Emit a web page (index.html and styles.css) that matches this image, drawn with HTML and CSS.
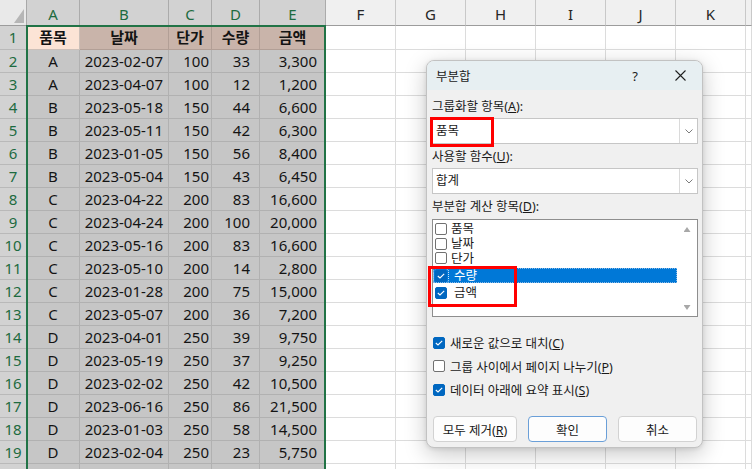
FILE: index.html
```html
<!DOCTYPE html>
<html lang="ko">
<head>
<meta charset="utf-8">
<title>부분합</title>
<link rel="stylesheet" href="styles.css">
</head>
<body>
<div class="sheet">
  <div class="row hdr">
    <div class="corner"><span class="tri"></span></div>
    <div class="ch sel">A</div><div class="ch sel">B</div><div class="ch sel">C</div><div class="ch sel">D</div><div class="ch sel">E</div>
    <div class="ch">F</div><div class="ch">G</div><div class="ch">H</div><div class="ch">I</div><div class="ch">J</div><div class="ch">K</div><div class="ch"></div>
  </div>
  <div class="row r1">
    <div class="rh">1</div>
    <div class="act b ctr">품목</div><div class="pch b ctr">날짜</div><div class="pch b ctr">단가</div><div class="pch b ctr">수량</div><div class="pch b ctr">금액</div>
    <div></div><div></div><div></div><div></div><div></div><div></div><div></div>
  </div>
  <div class="row"><div class="rh">2</div><div class="g ctr">A</div><div class="g rt pb">2023-02-07</div><div class="g rt pc">100</div><div class="g rt pd">33</div><div class="g rt pe">3,300</div><div></div><div></div><div></div><div></div><div></div><div></div><div></div></div>
  <div class="row"><div class="rh">3</div><div class="g ctr">A</div><div class="g rt pb">2023-04-07</div><div class="g rt pc">100</div><div class="g rt pd">12</div><div class="g rt pe">1,200</div><div></div><div></div><div></div><div></div><div></div><div></div><div></div></div>
  <div class="row"><div class="rh">4</div><div class="g ctr">B</div><div class="g rt pb">2023-05-18</div><div class="g rt pc">150</div><div class="g rt pd">44</div><div class="g rt pe">6,600</div><div></div><div></div><div></div><div></div><div></div><div></div><div></div></div>
  <div class="row"><div class="rh">5</div><div class="g ctr">B</div><div class="g rt pb">2023-05-11</div><div class="g rt pc">150</div><div class="g rt pd">42</div><div class="g rt pe">6,300</div><div></div><div></div><div></div><div></div><div></div><div></div><div></div></div>
  <div class="row"><div class="rh">6</div><div class="g ctr">B</div><div class="g rt pb">2023-01-05</div><div class="g rt pc">150</div><div class="g rt pd">56</div><div class="g rt pe">8,400</div><div></div><div></div><div></div><div></div><div></div><div></div><div></div></div>
  <div class="row"><div class="rh">7</div><div class="g ctr">B</div><div class="g rt pb">2023-05-04</div><div class="g rt pc">150</div><div class="g rt pd">43</div><div class="g rt pe">6,450</div><div></div><div></div><div></div><div></div><div></div><div></div><div></div></div>
  <div class="row"><div class="rh">8</div><div class="g ctr">C</div><div class="g rt pb">2023-04-22</div><div class="g rt pc">200</div><div class="g rt pd">83</div><div class="g rt pe">16,600</div><div></div><div></div><div></div><div></div><div></div><div></div><div></div></div>
  <div class="row"><div class="rh">9</div><div class="g ctr">C</div><div class="g rt pb">2023-04-24</div><div class="g rt pc">200</div><div class="g rt pd">100</div><div class="g rt pe">20,000</div><div></div><div></div><div></div><div></div><div></div><div></div><div></div></div>
  <div class="row"><div class="rh">10</div><div class="g ctr">C</div><div class="g rt pb">2023-05-16</div><div class="g rt pc">200</div><div class="g rt pd">83</div><div class="g rt pe">16,600</div><div></div><div></div><div></div><div></div><div></div><div></div><div></div></div>
  <div class="row"><div class="rh">11</div><div class="g ctr">C</div><div class="g rt pb">2023-05-10</div><div class="g rt pc">200</div><div class="g rt pd">14</div><div class="g rt pe">2,800</div><div></div><div></div><div></div><div></div><div></div><div></div><div></div></div>
  <div class="row"><div class="rh">12</div><div class="g ctr">C</div><div class="g rt pb">2023-01-28</div><div class="g rt pc">200</div><div class="g rt pd">75</div><div class="g rt pe">15,000</div><div></div><div></div><div></div><div></div><div></div><div></div><div></div></div>
  <div class="row"><div class="rh">13</div><div class="g ctr">C</div><div class="g rt pb">2023-05-07</div><div class="g rt pc">200</div><div class="g rt pd">36</div><div class="g rt pe">7,200</div><div></div><div></div><div></div><div></div><div></div><div></div><div></div></div>
  <div class="row"><div class="rh">14</div><div class="g ctr">D</div><div class="g rt pb">2023-04-01</div><div class="g rt pc">250</div><div class="g rt pd">39</div><div class="g rt pe">9,750</div><div></div><div></div><div></div><div></div><div></div><div></div><div></div></div>
  <div class="row"><div class="rh">15</div><div class="g ctr">D</div><div class="g rt pb">2023-05-19</div><div class="g rt pc">250</div><div class="g rt pd">37</div><div class="g rt pe">9,250</div><div></div><div></div><div></div><div></div><div></div><div></div><div></div></div>
  <div class="row"><div class="rh">16</div><div class="g ctr">D</div><div class="g rt pb">2023-02-02</div><div class="g rt pc">250</div><div class="g rt pd">42</div><div class="g rt pe">10,500</div><div></div><div></div><div></div><div></div><div></div><div></div><div></div></div>
  <div class="row"><div class="rh">17</div><div class="g ctr">D</div><div class="g rt pb">2023-06-16</div><div class="g rt pc">250</div><div class="g rt pd">86</div><div class="g rt pe">21,500</div><div></div><div></div><div></div><div></div><div></div><div></div><div></div></div>
  <div class="row"><div class="rh">18</div><div class="g ctr">D</div><div class="g rt pb">2023-01-03</div><div class="g rt pc">250</div><div class="g rt pd">58</div><div class="g rt pe">14,500</div><div></div><div></div><div></div><div></div><div></div><div></div><div></div></div>
  <div class="row"><div class="rh">19</div><div class="g ctr">D</div><div class="g rt pb">2023-02-04</div><div class="g rt pc">250</div><div class="g rt pd">23</div><div class="g rt pe">5,750</div><div></div><div></div><div></div><div></div><div></div><div></div><div></div></div>
  <div class="row"><div class="rh"></div><div class="g"></div><div class="g"></div><div class="g"></div><div class="g"></div><div class="g"></div><div></div><div></div><div></div><div></div><div></div><div></div><div></div></div>
</div>
<div class="selbox"></div>

<div class="dialog">
  <div class="titlebar">
    <span class="title">부분합</span>
    <span class="help">?</span>
    <span class="close"><svg width="11" height="11" viewBox="0 0 11 11"><path d="M0.5 0.5 L10.5 10.5 M10.5 0.5 L0.5 10.5" stroke="#1f1f1f" stroke-width="1.1" fill="none"/></svg></span>
  </div>
  <div class="dbody">
    <div class="lbl">그룹화할 항목(<u>A</u>):</div>
    <div class="combo"><span class="val">품목</span><span class="drop"><svg width="8" height="5" viewBox="0 0 8 5"><path d="M0.5 0.5 L4 4 L7.5 0.5" stroke="#7c7c7c" fill="none"/></svg></span></div>
    <div class="lbl mt">사용할 함수(<u>U</u>):</div>
    <div class="combo"><span class="val">합계</span><span class="drop"><svg width="8" height="5" viewBox="0 0 8 5"><path d="M0.5 0.5 L4 4 L7.5 0.5" stroke="#7c7c7c" fill="none"/></svg></span></div>
    <div class="lbl mt">부분합 계산 항목(<u>D</u>):</div>
    <div class="list">
      <div class="items">
        <div class="item"><span class="cb"></span><span>품목</span></div>
        <div class="item"><span class="cb"></span><span>날짜</span></div>
        <div class="item cut"><span class="cb"></span><span>단가</span></div>
        <div class="item hi chk"><span class="cb on focus"><svg width="8" height="6" viewBox="0 0 8 6"><path d="M0.8 3 L3 5 L7.2 0.8" stroke="#fff" stroke-width="1.1" fill="none"/></svg></span><span>수량</span></div>
        <div class="item last chk"><span class="cb on"><svg width="8" height="6" viewBox="0 0 8 6"><path d="M0.8 3 L3 5 L7.2 0.8" stroke="#fff" stroke-width="1.1" fill="none"/></svg></span><span>금액</span></div>
      </div>
      <div class="scroll"><span class="arr up"></span><span class="arr down"></span></div>
    </div>
    <div class="opts">
      <div class="opt"><span class="cb on"><svg width="8" height="6" viewBox="0 0 8 6"><path d="M0.8 3 L3 5 L7.2 0.8" stroke="#fff" stroke-width="1.1" fill="none"/></svg></span><span>새로운 값으로 대치(<u>C</u>)</span></div>
      <div class="opt"><span class="cb"></span><span>그룹 사이에서 페이지 나누기(<u>P</u>)</span></div>
      <div class="opt"><span class="cb on"><svg width="8" height="6" viewBox="0 0 8 6"><path d="M0.8 3 L3 5 L7.2 0.8" stroke="#fff" stroke-width="1.1" fill="none"/></svg></span><span>데이터 아래에 요약 표시(<u>S</u>)</span></div>
    </div>
    <div class="btns">
      <button class="btn w84">모두 제거(<u>R</u>)</button>
      <button class="btn w79 def">확인</button>
      <button class="btn w79">취소</button>
    </div>
  </div>
  <div class="mark m1"></div>
  <div class="mark m2"></div>
</div>
</body>
</html>
```

FILE: styles.css
```css
* { box-sizing: border-box; margin: 0; padding: 0; }
html, body { width: 752px; height: 469px; overflow: hidden; }
body {
  position: relative;
  background: #ffffff;
  font-family: "Noto Sans", "Noto Sans CJK KR", sans-serif;
  color: #141414;
}

/* ---------- sheet ---------- */
.sheet { display: flex; flex-direction: column; font-size: 15px; }
.row {
  display: grid;
  grid-template-columns: 27px 53px 89px 43px 48px 66px 70px 70px 70px 70px 70px 70px 6px;
  height: 23px;
  flex: none;
}
.row.hdr { height: 26px; }
.row.r1 { height: 24px; }
.row > div {
  border-right: 1px solid #dcdcdc;
  border-bottom: 1px solid #dcdcdc;
  display: flex;
  align-items: center;
  white-space: nowrap;
  overflow: hidden;
  line-height: 1;
}
.row > .corner {
  background: #e9e9e9;
  justify-content: flex-end;
  align-items: flex-end;
  padding: 0 2px 2px 0;
  border-right-color: #a8a8a8;
  border-bottom-color: #9c9c9c;
}
.tri {
  width: 10px;
  height: 14px;
  background: #b6b6b6;
  clip-path: polygon(100% 0, 100% 100%, 0 100%);
}
.row > .ch {
  justify-content: center;
  padding-top: 3px;
  background: #f0f0f0;
  border-right-color: #c8c8c8;
  border-bottom-color: #9c9c9c;
  color: #262626;
}
.row > .ch.sel {
  background: #d2d2d2;
  color: #1d6b40;
  border-right-color: #ababab;
}
.row > .rh {
  justify-content: center;
  background: #d2d2d2;
  color: #1d6b40;
  border-bottom-color: #b9b9b9;
  border-right-color: #9c9c9c;
}
.row > .g { background: #c6c6c6; border-color: #b1b1b1; }
.row > .act { background: #fce4d6; border-color: #ccc0b9; }
.row > .pch { background: #c9b4aa; border-color: #b29f96; }
.b { font-weight: 700; }
.row > .ctr { justify-content: center; }
.row > .rt { justify-content: flex-end; }
.row > .pb { padding-right: 5px; }
.row > .pc { padding-right: 2px; }
.row > .pd { padding-right: 9px; }
.row > .pe { padding-right: 8px; }

.selbox {
  position: absolute;
  left: 26px;
  top: 25px;
  width: 300px;
  height: 470px;
  border: 2px solid #217346;
  pointer-events: none;
}

/* ---------- dialog ---------- */
.dialog {
  position: absolute;
  left: 426px;
  top: 60px;
  width: 277px;
  height: 388px;
  background: #f0f0f0;
  border: 1px solid #c2c2c2;
  border-radius: 8px;
  box-shadow: 0 6px 22px rgba(0, 0, 0, 0.22), 0 1px 4px rgba(0, 0, 0, 0.1);
  font-size: 12.5px;
  color: #1a1a1a;
}
.titlebar {
  height: 29px;
  background: #e7eff2;
  border-radius: 7px 7px 0 0;
  display: flex;
  align-items: center;
  padding: 0 7px 0 9px;
  gap: 15px;
}
.title { flex: 1; font-size: 12.5px; }
.help { width: 30px; text-align: center; font-size: 13px; }
.close { width: 30px; display: flex; justify-content: center; align-items: center; }

.dbody { padding: 9px 4px 0 5px; }
.lbl { height: 16px; line-height: 16px; white-space: nowrap; }
.lbl.mt { margin-top: 5px; }
.combo {
  margin-top: 3px;
  height: 26px;
  background: #ffffff;
  border: 1px solid #c6c6c6;
  display: flex;
}
.combo .val { flex: 1; padding-left: 3px; line-height: 24px; }
.combo .drop {
  width: 18px;
  border-left: 1px solid #dadada;
  display: flex;
  align-items: center;
  justify-content: center;
}

.list {
  margin-top: 4px;
  height: 98px;
  background: #ffffff;
  border: 1px solid #8e8e8e;
  display: flex;
}
.items { flex: 1; padding: 1px 0 0 0; }
.item {
  height: 15px;
  display: flex;
  align-items: center;
  gap: 4px;
  padding-left: 2px;
  overflow: hidden;
  line-height: 14px;
  white-space: nowrap;
}
.item.cut { height: 13px; align-items: flex-start; padding-top: 1px; }
.item.chk { gap: 7px; }
.item.hi {
  margin-top: 4px;
  height: 15px;
  background: #0078d7;
  color: #ffffff;
  outline: 1px dotted #8ab9e6;
  outline-offset: -1px;
}
.item.last { height: 19px; }
.scroll {
  width: 20px;
  display: flex;
  flex-direction: column;
  justify-content: space-between;
  align-items: center;
  padding: 7px 0 6px;
}
.arr { width: 7px; height: 5px; background: #a8a8a8; }
.arr.up { clip-path: polygon(50% 0, 100% 100%, 0 100%); }
.arr.down { clip-path: polygon(0 0, 100% 0, 50% 100%); }

.cb {
  flex: none;
  width: 12px;
  height: 12px;
  border: 1px solid #717171;
  border-radius: 2px;
  background: #ffffff;
  display: flex;
  align-items: center;
  justify-content: center;
}
.cb.on { background: #0067c0; border-color: #0067c0; }
.cb.focus { outline: 1px dotted #cfe2f6; outline-offset: 1px; }

.opts { margin-top: 14px; }
.opt {
  height: 23.5px;
  display: flex;
  align-items: center;
  gap: 5px;
  padding-left: 1px;
  white-space: nowrap;
}

.btns { margin-top: 14.5px; display: flex; gap: 11px; padding-left: 1px; }
.btn {
  height: 26px;
  background: #fdfdfd;
  border: 1px solid #d2d2d2;
  border-radius: 4px;
  font: inherit;
  color: inherit;
}
.w84 { width: 84px; }
.w79 { width: 79px; }
.btn.def { border-color: #6a9fd8; }

.mark { position: absolute; border: 3px solid #ff0000; pointer-events: none; }
.m1 { left: 3px; top: 56px; width: 64px; height: 30px; }
.m2 { left: 1px; top: 205px; width: 89px; height: 41px; }
```
